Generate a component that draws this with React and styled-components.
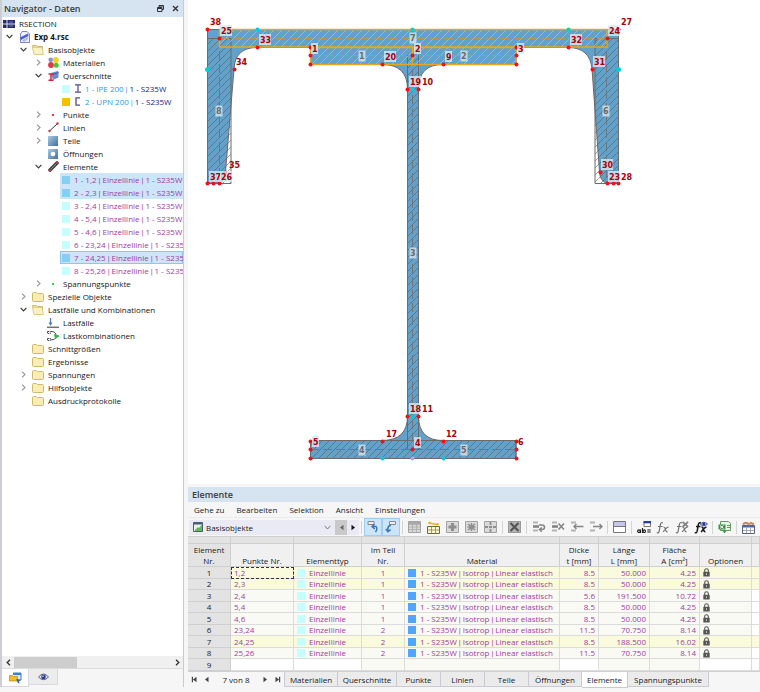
import React, { useState } from "react";
import styled, { createGlobalStyle, css } from "styled-components";

const GlobalStyle = createGlobalStyle`
  * { box-sizing: border-box; }
  body { margin: 0; background: #f6f6f6; color: #1a1a1a; font: 8px/13px "Open Sans", "Noto Sans", sans-serif; }
  button, select, input { font: inherit; color: inherit; }
  button { border: 0; padding: 0; background: none; }
  svg { display: block; }
`;

/* ---------- page frame ---------- */

const Page = styled.div`
  display: grid;
  grid-template-columns: 184px minmax(0, 1fr);
  gap: 4px;
  min-height: 100vh;
  padding-bottom: 5px;
`;
const Dock = styled.aside`
  display: flex;
  flex-direction: column;
  min-width: 0;
  border: solid #cdcdd6;
  border-width: 0 1px 0 2px;
  border-right-color: #c9c9d4;
`;
const DockTitle = styled.header`
  display: flex;
  align-items: center;
  gap: 8px;
  height: 17px;
  padding: 0 4px 0 2px;
  background: #d6e4f1;
  font-size: 9px;
`;
const DockHeading = styled.h2`
  flex: 1;
  margin: 0;
  font-size: 9px;
  font-weight: 600;
  color: #3c3c3c;
`;
const Main = styled.main`
  display: flex;
  flex-direction: column;
  min-width: 0;
`;
const Canvas = styled.section`
  flex: 1;
  min-height: 240px;
  background: #fff;
  svg { width: 100%; height: 100%; }
`;

/* ---------- tree ---------- */

const Tree = styled.ul`
  flex: 1;
  margin: 0;
  padding: 0;
  list-style: none;
  background: #fff;
  overflow: hidden;
`;
const TreeRow = styled.li`
  display: flex;
  align-items: center;
  height: 13px;
  margin-left: ${(p) => p.$indent}px;
  padding-left: ${(p) => (p.$leaf ? 2 : 0)}px;
  white-space: nowrap;
  color: ${(p) => p.$color || "#151515"};
  ${(p) => p.$selected && css`background: #cce5f8;`}
  ${(p) => p.$focused && css`box-shadow: inset 0 0 0 1px #8ec6f3;`}
`;
const Toggle = styled.button`
  display: grid;
  place-items: center;
  flex: none;
  width: 15px;
  height: 13px;
`;
const IconBox = styled.span`
  display: grid;
  place-items: center;
  flex: none;
  width: ${(p) => p.$w || 14}px;
  margin-right: 3px;
`;
const TreeText = styled.span`
  font-weight: ${(p) => (p.$bold ? 700 : 400)};
`;
const Blue = styled.span`
  color: #2f97ee;
`;
const Bar = styled.span`
  font-family: Roboto, sans-serif;
  line-height: 0;
  white-space: pre;
`;
const Swatch = styled.span`
  display: inline-block;
  flex: none;
  width: 8px;
  height: 8px;
  margin-right: 4px;
  vertical-align: middle;
  background: ${(p) => p.$c};
`;

const HScroll = styled.div`
  display: flex;
  align-items: center;
  justify-content: space-between;
  height: 12px;
  background: #f0f0f0;
`;
const ScrollButton = styled.button`
  display: grid;
  place-items: center;
  width: 12px;
  height: 12px;
`;
const ScrollTrack = styled.div`
  flex: 1;
`;
const Thumb = styled.div`
  width: 40%;
  height: 11px;
  background: #cdcdcd;
`;
const DockTabs = styled.div`
  display: flex;
  height: 19px;
  border-top: 1px solid #dcdcdc;
`;
const DockTab = styled.button`
  display: grid;
  place-items: center;
  width: ${(p) => (p.$on ? 27 : 29)}px;
  height: ${(p) => (p.$on ? 18 : 16)}px;
  background: ${(p) => (p.$on ? "#fff" : "#ececec")};
  border: solid #d8d8de;
  border-width: 0 1px 1px 0;
`;

/* ---------- table panel ---------- */

const PanelTitle = styled.h2`
  margin: 3px 0 0;
  height: 15px;
  padding-left: 4px;
  background: #d6e4f1;
  font-size: 9px;
  line-height: 15px;
  font-weight: 600;
  color: #3c3c3c;
`;
const MenuBar = styled.nav`
  display: flex;
  gap: 12px;
  height: 15px;
  padding-left: 6px;
  align-items: center;
`;
const MenuItem = styled.button`
  line-height: 15px;
`;
const ToolBar = styled.div`
  display: flex;
  align-items: center;
  height: 19px;
  padding-left: 1px;
  border-top: 1px solid #ebebeb;
  overflow: hidden;
`;
const PickerLabel = styled.label`
  display: flex;
  align-items: center;
  gap: 3px;
  flex: none;
  width: 146px;
  height: 15px;
  padding: 0 4px;
  background: #eaeaf4;
`;
const Picker = styled.select`
  flex: 1;
  min-width: 0;
  height: 15px;
  padding: 0;
  border: 0;
  appearance: none;
  background: transparent;
`;
const StepButton = styled.button`
  display: grid;
  place-items: center;
  flex: none;
  width: 12px;
  height: 15px;
  background: ${(p) => (p.$grey ? "#c9c9c9" : "#eaeaf4")};
`;
const Tool = styled.button`
  display: grid;
  place-items: center;
  flex: none;
  width: 19px;
  height: 18px;
  ${(p) => p.$on && css`
    width: 18px;
    background: #cce5fb;
    border: 1px solid #9fcdf3;
  `}
`;
const Sep = styled.span`
  flex: none;
  width: 1px;
  height: 13px;
  margin: 0 2px;
  background: #d4d4d4;
`;
const TableWrap = styled.div`
  overflow: hidden;
  background: #fff;
  border-bottom: 1px solid #cfcfd4;
`;
const Grid = styled.table`
  width: 100%;
  table-layout: fixed;
  border-collapse: separate;
  border-spacing: 0;
  line-height: 10px;
`;
const Col = styled.col`
  width: ${(p) => (p.$w ? `${p.$w}px` : "auto")};
`;
const Strip = styled.th`
  height: 8px;
  padding: 0;
  background: #e3e3e3;
  border: solid #cfcfcf;
  border-width: 1px 1px 1px 0;
  line-height: 4px;
`;
const Head = styled.th`
  height: 23px;
  padding: 0;
  vertical-align: bottom;
  font-weight: 400;
  line-height: 11px;
  white-space: pre-line;
  background: ${(p) => (p.$dark ? "#e3e3e3" : "#f0f0f0")};
  border: solid #cfcfcf;
  border-width: 0 1px 1px 0;
`;
const Row = styled.tr`
  height: 11px;
  color: #a23ba2;
  &:nth-child(odd) { height: 12px; }
`;
const RowHead = styled.th`
  padding: 0;
  font-weight: 400;
  color: #1a1a1a;
  background: #e3e3e3;
  border: solid #cfcfcf;
  border-width: 0 1px 1px 0;
`;
const Cell = styled.td`
  padding: 0 3px;
  white-space: nowrap;
  overflow: hidden;
  text-align: ${(p) => p.$align || "left"};
  background: ${(p) => (p.$sel ? "#fafadc" : p.$white ? "#fff" : "#fafaf5")};
  border: solid #dcdcdc;
  border-width: 0 1px 1px 0;
  ${(p) => p.$focus && css`outline: 1px dashed #333; outline-offset: -1px;`}
`;
const CellLine = styled.span`
  display: flex;
  align-items: center;
`;

const BottomBar = styled.div`
  display: flex;
  height: 15px;
`;
const Pager = styled.div`
  display: flex;
  align-items: center;
  justify-content: space-between;
  flex: none;
  width: 96px;
  padding: 0 2px;
`;
const PagerButton = styled.button`
  display: grid;
  place-items: center;
  width: 9px;
  height: 14px;
`;
const PagerText = styled.span`
  padding: 0 8px;
`;
const Tab = styled.button`
  flex: none;
  width: ${(p) => p.$w}px;
  height: ${(p) => (p.$on ? 16 : 15)}px;
  background: ${(p) => (p.$on ? "#fff" : "#ebebeb")};
  border: solid #cacad4;
  border-width: 0 1px 1px 0;
  &:first-of-type { border-left-width: 1px; }
`;

/* ---------- icons ---------- */

const Chevron = ({ open }) => (
  <svg width="7" height="7" viewBox="0 0 7 7" fill="none" stroke={open ? "#3a3a3a" : "#9a9a9a"} strokeWidth="1.2">
    <path d={open ? "M.6 1.8 3.5 4.8 6.4 1.8" : "M2 .6 5 3.5 2 6.4"} />
  </svg>
);

const icons = {
  flag: (
    <svg width="12" height="8" viewBox="0 0 12 8">
      <path d="M0 0h12v8H0z" fill="#252c68" />
      <path d="M0 4h12M4 0v8" stroke="#dfe3f4" strokeWidth="1" />
      <path d="M6 2h4M6 6h4" stroke="#8d94c4" strokeWidth=".8" />
    </svg>
  ),
  model: (
    <svg width="11" height="12" viewBox="0 0 11 12">
      <path d="M3 .5h5l2.5 2.5v8.5H1.5V3z" fill="#eef0fb" stroke="#7b85c8" />
      <path d="M1 6.5 9 2.5 9.5 5 2 9z" fill="#4a5fd0" />
      <path d="M3 9.5 9 6v2L5 11z" fill="#a9b5ee" />
    </svg>
  ),
  folder: (
    <svg width="12" height="10" viewBox="0 0 12 10">
      <path d="M.5 1.5Q.5.5 1.5.5h3l1 1h5q1 0 1 1v6q0 1-1 1h-9q-1 0-1-1z" fill="#f9edb5" stroke="#cdbb6c" />
    </svg>
  ),
  folderOpen: (
    <svg width="12" height="10" viewBox="0 0 12 10">
      <path d="M.5.5h4l1 1h5v8h-8z" fill="#f3e39c" stroke="#cdbb6c" />
      <path d="M.5 2.5h8.5q1 0 1.2 1l1.3 6H3Q2 9.500 1.700 8.500z" fill="#fbf2c4" stroke="#d6c67c" strokeWidth=".8" />
    </svg>
  ),
  materials: (
    <svg width="11" height="11" viewBox="0 0 11 11">
      <circle cx="2.700" cy="2.800" r="2.300" fill="#8b8fd0" />
      <circle cx="7.800" cy="3" r="2.900" fill="#f0d51f" />
      <circle cx="3" cy="8" r="2.900" fill="#e53548" />
      <circle cx="8.200" cy="8.300" r="2.500" fill="#48c43c" />
    </svg>
  ),
  sections: (
    <svg width="11" height="10" viewBox="0 0 11 10">
      <path d="M3 2 9.500 0 10.500.7v5.800L5 9z" fill="#6d87cd" />
      <path d="M5 3.500 10.500 1.500" stroke="#435bab" />
      <path d="M.5 3h5M.5 9.200h5M3 3v6" stroke="#d9232f" strokeWidth="1.500" />
    </svg>
  ),
  ipe: (
    <svg width="8" height="9" viewBox="0 0 8 9">
      <path d="M1 .8h6M1 8.200h6M4 .8v7.400" stroke="#4a4aa0" strokeWidth="1.200" />
    </svg>
  ),
  upn: (
    <svg width="8" height="9" viewBox="0 0 8 9" fill="none">
      <path d="M6 .8H2v7.400h4" stroke="#4a4aa0" strokeWidth="1.300" />
    </svg>
  ),
  point: (
    <svg width="10" height="10" viewBox="0 0 10 10"><path d="M4 4h2v2H4z" fill="#e23b3b" /></svg>
  ),
  greenPoint: (
    <svg width="10" height="10" viewBox="0 0 10 10"><path d="M4 4h2v2H4z" fill="#3fcf45" /></svg>
  ),
  line: (
    <svg width="11" height="11" viewBox="0 0 11 11">
      <path d="M1.500 9 9.500 1.500" stroke="#333" />
      <circle cx="1.500" cy="9" r="1.200" fill="#d33" />
      <circle cx="9.500" cy="1.500" r="1.200" fill="#d33" />
    </svg>
  ),
  part: (
    <svg width="10" height="10" viewBox="0 0 10 10">
      <defs><linearGradient id="pg" x2="1" y2="1"><stop stopColor="#a8cbe6" /><stop offset="1" stopColor="#456f9b" /></linearGradient></defs>
      <path d="M0 0h10v10H0z" fill="url(#pg)" />
    </svg>
  ),
  opening: (
    <svg width="10" height="10" viewBox="0 0 10 10">
      <path d="M0 0h10v10H0z" fill="url(#pg)" />
      <circle cx="5" cy="5" r="2.300" fill="#fff" />
    </svg>
  ),
  element: (
    <svg width="11" height="11" viewBox="0 0 11 11">
      <path d="M2 9 9 2" stroke="#444" strokeWidth="3.600" strokeLinecap="round" />
      <path d="M2.500 8.500 8.500 2.500" stroke="#9a9a9a" strokeWidth=".8" />
      <circle cx="1.700" cy="9.300" r="1.100" fill="#d33" />
      <circle cx="9.300" cy="1.700" r="1.100" fill="#d33" />
    </svg>
  ),
  loadcase: (
    <svg width="12" height="10" viewBox="0 0 12 10">
      <path d="M3.500 0v6" stroke="#4f78c0" strokeWidth="1.200" />
      <path d="M1.500 4.500h4L3.500 8z" fill="#4f78c0" />
      <path d="M0 9.200h12" stroke="#333" />
    </svg>
  ),
  loadcombo: (
    <svg width="12" height="12" viewBox="0 0 12 12" fill="none" stroke="#333" strokeWidth=".9">
      <path d="M.5 1.500h3v2h-3zM.5 8.500h3v2h-3z" strokeDasharray="1.500 .6" />
      <path d="M4 1.500q5 0 5 4M4 9.800q5 0 5-3" />
      <path d="M7.500 4.500 12 6 8.500 8.500z" fill="#2eb84a" stroke="#2eb84a" />
    </svg>
  ),
};

const NavigatorTabIcon = () => (
  <svg width="13" height="12" viewBox="0 0 13 12">
    <path d="M4 1h8v7H6" fill="#dceafb" stroke="#3c7fd0" />
    <path d="M4 1h8v2H4z" fill="#3c7fd0" />
    <path d="M.5 3.500h3l1 1h4V9h-8z" fill="#f1bd2c" stroke="#b98618" strokeWidth=".7" />
    <path d="M7 7l5 1-2 1 .5 2.500-1.500-.5z" fill="#2f5da8" />
  </svg>
);
const EyeIcon = () => (
  <svg width="11" height="8" viewBox="0 0 11 8">
    <path d="M.5 4Q5.500-2 10.500 4 5.500 9.500.5 4z" fill="#dfe3f2" stroke="#555b80" strokeWidth=".9" />
    <circle cx="5.500" cy="3.900" r="2.300" fill="#2d3d8c" />
    <circle cx="5" cy="3.200" r=".7" fill="#fff" />
  </svg>
);
const LockIcon = () => (
  <svg width="7" height="9" viewBox="0 0 7 9">
    <path d="M1.700 4V2.600Q1.700.7 3.500.7t1.800 1.900V4" fill="none" stroke="#555" strokeWidth="1.100" />
    <path d="M.3 3.800h6.400v4.700H.3z" fill="#555" />
    <path d="M3.500 5.200v1.800" stroke="#ddd" strokeWidth=".8" />
  </svg>
);
const ArrowIcon = ({ back, bar, color = "#444" }) => (
  <svg width="7" height="7" viewBox="0 0 7 7" fill={color}>
    <path d={back ? "M5.500.8v5.400L2 3.500z" : "M1.500.8v5.400L5 3.500z"} />
    {bar && <path d={back ? "M.8.8h1.200v5.400H.8z" : "M5 .8h1.200v5.400H5z"} />}
  </svg>
);
const SheetIcon = () => (
  <svg width="10" height="10" viewBox="0 0 10 10">
    <path d="M.5.5h9v9h-9z" fill="#e7f3e4" stroke="#4d5c78" />
    <path d="M.5.500h9v2h-9z" fill="#4d5c78" />
    <path d="M2 8 5 5l1 1 3-3.500V9H2z" fill="#66b366" />
  </svg>
);

const grey = "#8e8e8e";
const GridGlyph = ({ mark }) => (
  <svg width="13" height="12" viewBox="0 0 13 12" fill="none">
    <path d="M.5.5h12v11H.5z" fill="#dadada" stroke="#a2a2a2" />
    {mark === "lines" && <><path d="M1 1h11v2H1z" fill="#aaa" /><path d="M1 3.500h11M1 6h11M1 8.500h11M4.500 1v10M8.500 1v10" stroke="#a8a8a8" strokeWidth=".8" /></>}
    {mark === "plus" && <path d="M6.500 2v8M2.500 6h8" stroke={grey} strokeWidth="3" />}
    {mark === "star" && <path d="M3 3l7 6M10 3 3 9M6.500 2v8M2.500 6h8" stroke={grey} strokeWidth="1.500" />}
    {mark === "split" && <path d="M1 6h3M9 6h3M6.500 1v3M6.500 8v3M5 6h3" stroke={grey} strokeWidth="1.800" />}
    {mark === "cross" && <><path d="M.5.5h12v11H.5z" fill="#b5b5b5" stroke="#999" /><path d="M2.500 2l8 8M10.500 2l-8 8" stroke="#555" strokeWidth="2.200" /></>}
  </svg>
);
const RowGlyph = ({ mark }) => (
  <svg width="14" height="12" viewBox="0 0 14 12" fill="none" stroke="#858585">
    <path d="M1 1.500h5M1 9.500h5" stroke="#b4b4b4" strokeWidth="2.200" />
    {(mark === "loop" || mark === "x") && <path d="M1 5.500h6" strokeWidth="2.600" />}
    {mark === "loop" && <path d="M7 4h3q2.500 0 2.500 2.300T10 8.600H8M9.700 6.500 7.500 8.600l2.200 2.100" strokeWidth="1.500" />}
    {mark === "x" && <path d="M7.500 2.500l5.500 6M13 2.500l-5.500 6" strokeWidth="1.600" />}
    {mark === "in" && <path d="M13.500 5.500H4M6.500 3 4 5.500 6.500 8" strokeWidth="1.400" />}
    {mark === "out" && <path d="M4 5.500h9M10.500 3 13 5.500 10.500 8" strokeWidth="1.400" />}
  </svg>
);
const LinkGlyph = ({ down }) => (
  <svg width="12" height="12" viewBox="0 0 12 12" fill="none">
    <path d={down ? "M4.500.5h6v3h-6z" : "M1 .5h6v3H1z"} fill="#eee" stroke="#888" />
    <path d={down ? "M6 4Q2 5 3 10M.8 8 3 10.700l2.700-2" : "M5 5.500h4q2 2-.5 5.500M7.500 3.200 5 5.500l2.700 2.500"} stroke="#3a78b5" strokeWidth="1.500" />
  </svg>
);
const NewRowGlyph = () => (
  <svg width="13" height="13" viewBox="0 0 13 13">
    <path d="M.5 5.500h12v7H.5z" fill="#fbf7cd" stroke="#6f6a3e" />
    <path d="M1 9h11M4.500 6v6M8.500 6v6" stroke="#8a8458" strokeWidth=".8" />
    <path d="M2 2 10 3.500" fill="none" stroke="#eeb31c" strokeWidth="1.400" />
    <circle cx="2.500" cy="2" r="1.300" fill="#eeb31c" />
    <circle cx="10.500" cy="3.300" r="1.300" fill="#eeb31c" />
  </svg>
);
const WindowGlyph = () => (
  <svg width="13" height="12" viewBox="0 0 13 12">
    <path d="M.5.5h12v11H.5z" fill="#fff" stroke="#777" />
    <path d="M1 1h11v4H1z" fill="#c5c5ec" />
    <path d="M1 5.500h11" stroke="#777" />
  </svg>
);
const FxGlyph = ({ extra }) => (
  <svg width="14" height="13" viewBox="0 0 14 13" fill="none">
    <g stroke={extra === "eye" ? "#1c1c1c" : "#707070"} strokeWidth={extra === "eye" ? 1.5 : 1.2}>
      <path d="M6.800 2Q4.800.8 4.300 4L3.200 10Q2.800 12.500.8 11.500M2 5.500h4.500" />
      <path d="M7.500 6q1.500 0 2 2.500t2 2.300M12.500 6Q10 6.500 7.200 11" />
    </g>
    {extra === "x" && <path d="M7.500.8l5.500 5M13 .8 7.500 5.800" stroke="#808080" strokeWidth="1.800" />}
    {extra === "eye" && <><path d="M6 3Q9.800-.5 13.500 3 9.800 6.500 6 3z" fill="#c8cdef" stroke="#2d3d8c" strokeWidth=".8" /><circle cx="9.800" cy="3" r="1.500" fill="#24348a" /></>}
  </svg>
);
const AbGlyph = () => (
  <svg width="14" height="13" viewBox="0 0 14 13" fill="none">
    <path d="M7 .5h6.500v5H7z" fill="#fff" stroke="#777" />
    <path d="M6.500 0h7.500v2.300H6.500z" fill="#2b3fa0" />
    <g stroke="#1c1c1c" strokeWidth="1.100">
      <circle cx="1.900" cy="10.200" r="1.300" />
      <path d="M3.500 8.500v3.500M5.500 7v5M10.300 9h3.400M10.300 11h3.400" />
      <circle cx="7.200" cy="10.200" r="1.300" />
    </g>
  </svg>
);
const ExcelGlyph = () => (
  <svg width="13" height="13" viewBox="0 0 13 13" fill="none">
    <path d="M2.500.5h8l2 2v7h-10z" fill="#e9f5e9" stroke="#5d9a5f" />
    <path d="M.5 3.500h7v5h-7z" fill="#3f9145" />
    <path d="M2 4.500l3.500 3M5.500 4.500 2 7.500" stroke="#fff" />
    <path d="M9 4.500h3M9 6.500h3" stroke="#5d9a5f" />
    <path d="M4.500 9.500h4L6.500 12.500z" fill="#3f9145" />
  </svg>
);
const SettingsGlyph = () => (
  <svg width="13" height="13" viewBox="0 0 13 13" fill="none">
    <path d="M.5 4.500h12v8H.5z" fill="#fff" stroke="#55617d" />
    <path d="M.5 4.500h12v2H.5z" fill="#4b66a5" />
    <path d="M1 9.500h11M4.500 7v5M8.500 7v5" stroke="#8d95a8" strokeWidth=".8" />
    <path d="M1 3.500Q3 1 6 2.500L8 4M8 1.500l4 2" stroke="#c98d62" strokeWidth="2.200" />
  </svg>
);

/* ---------- data ---------- */

const purple = "#a23ba2";
const navigator = [
  { level: 0, icon: "flag", text: "RSECTION" },
  { level: 1, icon: "model", text: "Exp 4.rsc", open: true, bold: true },
  { level: 2, icon: "folderOpen", text: "Basisobjekte", open: true },
  { level: 3, icon: "materials", text: "Materialien", open: false },
  { level: 3, icon: "sections", text: "Querschnitte", open: true },
  { level: 4, swatch: "#c6feff", icon: "ipe", name: "1 - IPE 200 | ", text: "1 - S235W", color: "#20208a" },
  { level: 4, swatch: "#f5c100", icon: "upn", name: "2 - UPN 200 | ", text: "1 - S235W", color: "#20208a" },
  { level: 3, icon: "point", text: "Punkte", open: false },
  { level: 3, icon: "line", text: "Linien", open: false },
  { level: 3, icon: "part", text: "Teile", open: false },
  { level: 3, icon: "opening", text: "Öffnungen" },
  { level: 3, icon: "element", text: "Elemente", open: true },
  { level: 4, swatch: "#87cff2", text: "1 - 1,2 | Einzellinie | 1 - S235W", color: purple, selected: true },
  { level: 4, swatch: "#87cff2", text: "2 - 2,3 | Einzellinie | 1 - S235W", color: purple, selected: true },
  { level: 4, swatch: "#c6feff", text: "3 - 2,4 | Einzellinie | 1 - S235W", color: purple },
  { level: 4, swatch: "#c6feff", text: "4 - 5,4 | Einzellinie | 1 - S235W", color: purple },
  { level: 4, swatch: "#c6feff", text: "5 - 4,6 | Einzellinie | 1 - S235W", color: purple },
  { level: 4, swatch: "#c6feff", text: "6 - 23,24 | Einzellinie | 1 - S235", color: purple },
  { level: 4, swatch: "#87cff2", text: "7 - 24,25 | Einzellinie | 1 - S235", color: purple, selected: true, focused: true },
  { level: 4, swatch: "#c6feff", text: "8 - 25,26 | Einzellinie | 1 - S235", color: purple },
  { level: 3, icon: "greenPoint", text: "Spannungspunkte", open: false },
  { level: 2, icon: "folder", text: "Spezielle Objekte", open: false },
  { level: 2, icon: "folderOpen", text: "Lastfälle und Kombinationen", open: true },
  { level: 3, icon: "loadcase", text: "Lastfälle" },
  { level: 3, icon: "loadcombo", text: "Lastkombinationen" },
  { level: 2, icon: "folder", text: "Schnittgrößen" },
  { level: 2, icon: "folder", text: "Ergebnisse" },
  { level: 2, icon: "folder", text: "Spannungen", open: false },
  { level: 2, icon: "folder", text: "Hilfsobjekte", open: false },
  { level: 2, icon: "folder", text: "Ausdruckprotokolle" },
];
const indents = [0, 0, 14, 29, 58];

const columns = [
  ["Element\nNr.", 43], ["Punkte Nr.", 63], ["Elementtyp", 68], ["Im Teil\nNr.", 43], ["Material", 155],
  ["Dicke\nt [mm]", 39], ["Länge\nL [mm]", 51], ["Fläche\nA [cm²]", 50], ["Optionen", 52], ["", null],
];
const elements = [
  { points: "1,2", part: 1, t: "8.5", l: "50.000", a: "4.25", sel: true },
  { points: "2,3", part: 1, t: "8.5", l: "50.000", a: "4.25", sel: true },
  { points: "2,4", part: 1, t: "5.6", l: "191.500", a: "10.72" },
  { points: "5,4", part: 1, t: "8.5", l: "50.000", a: "4.25" },
  { points: "4,6", part: 1, t: "8.5", l: "50.000", a: "4.25" },
  { points: "23,24", part: 2, t: "11.5", l: "70.750", a: "8.14" },
  { points: "24,25", part: 2, t: "8.5", l: "188.500", a: "16.02", sel: true },
  { points: "25,26", part: 2, t: "11.5", l: "70.750", a: "8.14" },
];
const tabs = [
  ["Materialien", 54], ["Querschnitte", 59], ["Punkte", 44], ["Linien", 44], ["Teile", 44],
  ["Öffnungen", 53], ["Elemente", 46], ["Spannungspunkte", 81],
];

/* Sets each "|" of a label in a narrower face than the words round it. */
const Piped = ({ text }) =>
  text.split(" | ").map((part, i) => (
    <React.Fragment key={i}>{i > 0 && <Bar>{" | "}</Bar>}{part}</React.Fragment>
  ));

/* ---------- cross-section drawing ---------- */

const redPoints = [
  [207, 29], [207, 183], [213, 183], [219, 183], [225, 172], [234, 69], [219, 38], [257, 47],
  [310, 47], [310, 55], [310, 64], [382, 64], [412, 55], [516, 47], [516, 55], [516, 64], [443, 64],
  [568, 47], [592, 69], [607, 38], [618, 29], [600, 172], [607, 183], [613, 183], [618, 183],
  [407, 89], [418, 89], [407, 416], [418, 416], [382, 441], [443, 441],
  [310, 441], [310, 449], [310, 458], [516, 441], [516, 449], [516, 458], [412, 449],
];
const cyanPoints = [[257, 29], [412, 29], [568, 29], [412, 89], [412, 416], [382, 458], [443, 458]];
const pointLabels = [
  ["38", 210, 21], ["27", 621, 21], ["25", 221, 30, 1], ["24", 609, 30, 1], ["33", 260, 39, 1], ["32", 571, 39, 1],
  ["34", 236, 61], ["31", 594, 61, 1], ["35", 229, 164], ["37", 210, 176, 1], ["26", 221, 176, 1], ["30", 602, 164, 1],
  ["23", 609, 176, 1], ["28", 621, 176], ["1", 312, 48, 1], ["2", 415, 48, 1], ["3", 518, 48, 1], ["20", 385, 56, 1],
  ["9", 446, 56, 1], ["19", 410, 81, 1], ["10", 422, 81], ["18", 410, 408, 1], ["11", 422, 408],
  ["17", 386, 433], ["12", 446, 433], ["4", 415, 442, 1], ["5", 313, 441, 1], ["6", 518, 441],
];
const elementLabels = [
  ["7", 410, 38], ["1", 359, 56], ["2", 461, 56], ["8", 216, 111], ["6", 603, 111], ["3", 410, 253], ["4", 359, 450], ["5", 461, 450],
];

const LabelText = styled.text`
  font: 700 8px "DejaVu Sans", sans-serif;
  fill: ${(p) => (p.$plain ? "#6a6a6a" : "#a80008")};
`;

const SectionDrawing = () => (
  <svg viewBox="188 0 572 484" preserveAspectRatio="xMidYMid meet" role="img" aria-label="Querschnitt">
    <defs>
      <pattern id="hatch" width="7" height="7" patternUnits="userSpaceOnUse">
        <path d="M-1 8 8-1M-1 1 1-1M6 8 8 6" stroke="#566069" strokeWidth=".6" />
      </pattern>
      <pattern id="hatchGold" width="8" height="8" patternUnits="userSpaceOnUse">
        <path d="M-1 9 9-1M-1 1 1-1M7 9 9 7" stroke="#eeac1c" strokeWidth="1" />
      </pattern>
    </defs>
    <g fill="#62a1ca" stroke="#6b6b6b">
      <path d="M207.500 29.500H618.500V183.500H607Q600 181 599.500 172L592 69Q590 47.500 568 47.500H257Q235 47.500 234 69L225.500 172Q225 181 219 183.500H207.500z" />
      <path d="M310.500 47.500H516V64.500H443Q418.500 64.500 418.500 89V416Q418.500 440.500 443 440.500H516V458.500H310.500V440.500H382Q407.500 440.500 407.500 416V89Q407.500 64.500 382 64.500H310.500z" />
    </g>
    <g fill="url(#hatch)" stroke="#6b6b6b">
      <path d="M207.500 38.500h23.500v145h-23.500zM595 38.500h23.500v145H595z" />
      <path d="M407.500 55.500h11v394h-11zM310.500 440.500H516v18H310.500z" />
    </g>
    <g fill="none" stroke="#6f777b" strokeDasharray="9 4">
      <path d="M219.500 38v145M606.500 38v145M412.500 56v393M310 449.500h206" />
    </g>
    <g fill="url(#hatchGold)" stroke="#e8a61c">
      <path d="M219.500 29.500h387.500v17.500H219.500z" strokeWidth="1.500" />
      <path d="M310.500 47.500H516v17H310.500z" strokeWidth="1.500" />
      <path d="M412.500 47v18" strokeWidth="1.500" />
    </g>
    <path d="M219 38.500h388M310 55.500h206" fill="none" stroke="#b19a5b" strokeDasharray="10 4" />
    <g fill="#00cfd4">
      {cyanPoints.map(([x, y]) => <circle key={`${x}-${y}`} cx={x + 0.5} cy={y + 0.5} r="2" />)}
      <circle cx="207.500" cy="69.500" r="2.500" />
      <circle cx="618.500" cy="69.500" r="2.500" />
    </g>
    <g fill="#f50f14">
      {redPoints.map(([x, y]) => <circle key={`${x}-${y}`} cx={x + 0.5} cy={y + 0.5} r="2" />)}
    </g>
    <circle cx="412.500" cy="458.500" r="2" fill="#a9a4f5" />
    {elementLabels.map(([t, x, y]) => (
      <g key={`e${t}${y}`}>
        <rect x={x - 0.5} y={y - 5.5} width="7" height="11" fill="#d5e6f1" opacity=".8" />
        <LabelText $plain x={x} y={y + 3}>{t}</LabelText>
      </g>
    ))}
    {pointLabels.map(([t, x, y, boxed]) => (
      <g key={`p${t}`}>
        {boxed && <rect x={x - 1} y={y - 5} width={t.length * 5 + 2} height="11" fill="#dbe9f3" opacity=".8" />}
        <LabelText x={x} y={y + 4}>{t}</LabelText>
      </g>
    ))}
  </svg>
);

/* ---------- app ---------- */

const NavigatorDock = () => (
  <Dock>
    <DockTitle>
      <DockHeading>Navigator - Daten</DockHeading>
      <button aria-label="Fenster lösen">
        <svg width="7" height="7" viewBox="0 0 7 7" fill="none" stroke="#333"><path d="M2 2V.5h4.500v4H5M.5 2.500H5v4H.5zM.5 3.500H5M2 1h4" /></svg>
      </button>
      <button aria-label="Schließen">
        <svg width="7" height="7" viewBox="0 0 7 7" stroke="#333" strokeWidth="1.300"><path d="M1 1l5 5M6 1 1 6" /></svg>
      </button>
    </DockTitle>
    <Tree role="tree">
      {navigator.map((n, i) => (
        <TreeRow key={i} role="treeitem" aria-selected={!!n.selected} $indent={indents[n.level]} $leaf={n.level === 4}
          $color={n.color} $selected={n.selected} $focused={n.focused}>
          {n.level > 0 && n.level < 4 && (
            n.open === undefined ? <IconBox $w={12} /> : <Toggle aria-label={n.text}><Chevron open={n.open} /></Toggle>
          )}
          {n.swatch && <Swatch $c={n.swatch} />}
          {n.icon && <IconBox $w={n.swatch ? 8 : 14}>{icons[n.icon]}</IconBox>}
          <TreeText $bold={n.bold}>{n.name && <Blue><Piped text={n.name} /></Blue>}<Piped text={n.text} /></TreeText>
        </TreeRow>
      ))}
    </Tree>
    <HScroll>
      <ScrollButton aria-label="Nach links">
        <svg width="5" height="7" viewBox="0 0 5 7" fill="none" stroke="#333" strokeWidth="1.300"><path d="M4 .8 1.200 3.500 4 6.200" /></svg>
      </ScrollButton>
      <ScrollTrack><Thumb /></ScrollTrack>
      <ScrollButton aria-label="Nach rechts">
        <svg width="5" height="7" viewBox="0 0 5 7" fill="none" stroke="#333" strokeWidth="1.300"><path d="M1 .8 3.800 3.500 1 6.200" /></svg>
      </ScrollButton>
    </HScroll>
    <DockTabs>
      <DockTab $on aria-label="Daten"><NavigatorTabIcon /></DockTab>
      <DockTab aria-label="Anzeige"><EyeIcon /></DockTab>
    </DockTabs>
  </Dock>
);

const Tools = () => (
  <ToolBar>
    <PickerLabel>
      <SheetIcon />
      <Picker aria-label="Tabellengruppe" defaultValue="Basisobjekte"><option>Basisobjekte</option></Picker>
      <svg width="7" height="7" viewBox="0 0 7 7" fill="none" stroke="#777"><path d="M.6 1.800 3.500 5 6.400 1.800" /></svg>
    </PickerLabel>
    <StepButton $grey aria-label="Vorherige Gruppe"><ArrowIcon back color="#666" /></StepButton>
    <StepButton aria-label="Nächste Gruppe"><ArrowIcon color="#111" /></StepButton>
    <Sep />
    <Tool $on aria-label="Auswahl übernehmen"><LinkGlyph /></Tool>
    <Tool $on aria-label="Auswahl übertragen"><LinkGlyph down /></Tool>
    <Sep />
    <Tool aria-label="Tabelle"><GridGlyph mark="lines" /></Tool>
    <Tool aria-label="Neue Zeile"><NewRowGlyph /></Tool>
    <Tool aria-label="Einfügen"><GridGlyph mark="plus" /></Tool>
    <Tool aria-label="Mehrfach einfügen"><GridGlyph mark="star" /></Tool>
    <Tool aria-label="Teilen"><GridGlyph mark="split" /></Tool>
    <Sep />
    <Tool aria-label="Löschen"><GridGlyph mark="cross" /></Tool>
    <Sep />
    <Tool aria-label="Zeile kopieren"><RowGlyph mark="loop" /></Tool>
    <Tool aria-label="Zeile löschen"><RowGlyph mark="x" /></Tool>
    <Tool aria-label="Zeile einfügen"><RowGlyph mark="in" /></Tool>
    <Tool aria-label="Zeile entfernen"><RowGlyph mark="out" /></Tool>
    <Sep />
    <Tool aria-label="Ansicht"><WindowGlyph /></Tool>
    <Sep />
    <Tool aria-label="Parameter"><AbGlyph /></Tool>
    <Tool aria-label="Formel"><FxGlyph /></Tool>
    <Tool aria-label="Formel löschen"><FxGlyph extra="x" /></Tool>
    <Tool aria-label="Formeln anzeigen"><FxGlyph extra="eye" /></Tool>
    <Sep />
    <Tool aria-label="Excel-Export"><ExcelGlyph /></Tool>
    <Sep />
    <Tool aria-label="Tabelleneinstellungen"><SettingsGlyph /></Tool>
  </ToolBar>
);

const ElementTable = () => (
  <TableWrap>
    <Grid>
      <colgroup>{columns.map(([n, w], i) => <Col key={i} $w={w} />)}</colgroup>
      <thead>
        <tr>{columns.map(([n], i) => <Strip key={i} />)}</tr>
        <tr>{columns.map(([n], i) => <Head key={i} $dark={i === 0}>{n}</Head>)}</tr>
      </thead>
      <tbody>
        {elements.map((e, i) => (
          <Row key={e.points}>
            <RowHead>{i + 1}</RowHead>
            <Cell $sel={e.sel} $focus={i === 0}>{e.points}</Cell>
            <Cell $sel={e.sel}><CellLine><Swatch $c="#c6feff" />Einzellinie</CellLine></Cell>
            <Cell $sel={e.sel} $align="center">{e.part}</Cell>
            <Cell $sel={e.sel}><CellLine><Swatch $c="#53a4ff" /><span><Piped text="1 - S235W | Isotrop | Linear elastisch" /></span></CellLine></Cell>
            <Cell $sel={e.sel} $align="right">{e.t}</Cell>
            <Cell $sel={e.sel} $align="right">{e.l}</Cell>
            <Cell $sel={e.sel} $align="right">{e.a}</Cell>
            <Cell $sel={e.sel}><LockIcon /></Cell>
            <Cell $sel={e.sel} $white />
          </Row>
        ))}
        <Row>
          <RowHead>9</RowHead>
          {columns.slice(1).map(([n], i) => <Cell key={n} $white={[0, 1, 4, 7, 8].includes(i)} />)}
        </Row>
      </tbody>
    </Grid>
  </TableWrap>
);

export default function App() {
  const [tab, setTab] = useState("Elemente");
  return (
    <>
      <GlobalStyle />
      <Page>
        <NavigatorDock />
        <Main>
          <Canvas><SectionDrawing /></Canvas>
          <PanelTitle>Elemente</PanelTitle>
          <MenuBar>
            {["Gehe zu", "Bearbeiten", "Selektion", "Ansicht", "Einstellungen"].map((m) => <MenuItem key={m}>{m}</MenuItem>)}
          </MenuBar>
          <Tools />
          <ElementTable />
          <BottomBar>
            <Pager>
              <PagerButton aria-label="Erste"><ArrowIcon back bar /></PagerButton>
              <PagerButton aria-label="Vorherige"><ArrowIcon back /></PagerButton>
              <PagerText>7 von 8</PagerText>
              <PagerButton aria-label="Nächste"><ArrowIcon /></PagerButton>
              <PagerButton aria-label="Letzte"><ArrowIcon bar /></PagerButton>
            </Pager>
            {tabs.map(([name, w]) => <Tab key={name} $w={w} $on={tab === name} onClick={() => setTab(name)}>{name}</Tab>)}
          </BottomBar>
        </Main>
      </Page>
    </>
  );
}
